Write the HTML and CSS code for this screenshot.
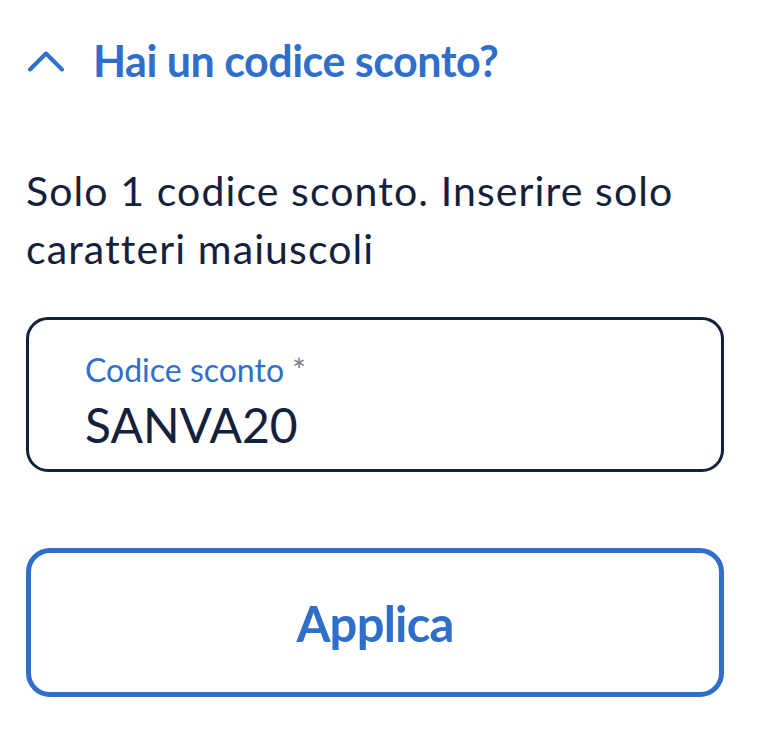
FILE: index.html
```html
<!DOCTYPE html>
<html lang="it">
<head>
<meta charset="utf-8">
<title>Codice sconto</title>
<link rel="stylesheet" href="styles.css">
</head>
<body>
<div class="panel">
  <button class="toggle" type="button">
    <svg class="chevron" width="36" height="22" viewBox="0 0 36 22" aria-hidden="true">
      <path d="M2 19.5 L18 3.5 L34 19.5" fill="none" stroke="currentColor" stroke-width="4" stroke-linecap="round" stroke-linejoin="round"/>
    </svg>
    <span class="toggle-text">Hai un codice sconto?</span>
  </button>
  <p class="hint">Solo 1 codice sconto. Inserire solo caratteri maiuscoli</p>
  <div class="field">
    <label class="field-label" for="code">Codice sconto <span class="req">*</span></label>
    <input class="field-input" id="code" type="text" value="SANVA20">
  </div>
  <button class="apply" type="button">Applica</button>
</div>
</body>
</html>
```
FILE: styles.css
```css
html, body {
  margin: 0;
  padding: 0;
  background: #ffffff;
}
body {
  font-family: Lato, "Noto Sans", sans-serif;
  color: #13213c;
}
.panel {
  width: 698px;
  padding: 0 0 0 26px;
  display: flex;
  flex-direction: column;
}
.toggle {
  display: flex;
  align-items: center;
  gap: 29px;
  background: none;
  border: none;
  padding: 0 0 0 2px;
  margin: 37px 0 0 0;
  height: 48px;
  color: #2f6fca;
  font-family: inherit;
  cursor: pointer;
  align-self: flex-start;
}
.chevron {
  display: block;
  flex: none;
}
.toggle-text {
  font-size: 43px;
  font-weight: 700;
  line-height: 48px;
  letter-spacing: -0.5px;
}
.hint {
  margin: 77px 0 0 0;
  font-size: 41px;
  line-height: 58px;
  letter-spacing: 1.1px;
  color: #13213c;
}
.field {
  box-sizing: border-box;
  margin-top: 39px;
  height: 155px;
  border: 3px solid #13213c;
  border-radius: 22px;
  padding: 30px 0 0 56px;
  display: flex;
  flex-direction: column;
  gap: 7px;
}
.field-label {
  font-size: 32px;
  line-height: 40px;
  color: #2f6fca;
}
.req {
  color: #757a82;
}
.field-input {
  border: none;
  outline: none;
  padding: 0;
  margin: 0;
  font-family: inherit;
  font-size: 48px;
  line-height: 56px;
  height: 56px;
  color: #13213c;
  background: transparent;
}
.apply {
  box-sizing: border-box;
  margin-top: 76px;
  height: 149px;
  border: 5px solid #2f6fca;
  border-radius: 24px;
  background: #fff;
  color: #2f6fca;
  font-family: inherit;
  font-size: 49px;
  font-weight: 700;
  letter-spacing: -0.8px;
  cursor: pointer;
}
```
